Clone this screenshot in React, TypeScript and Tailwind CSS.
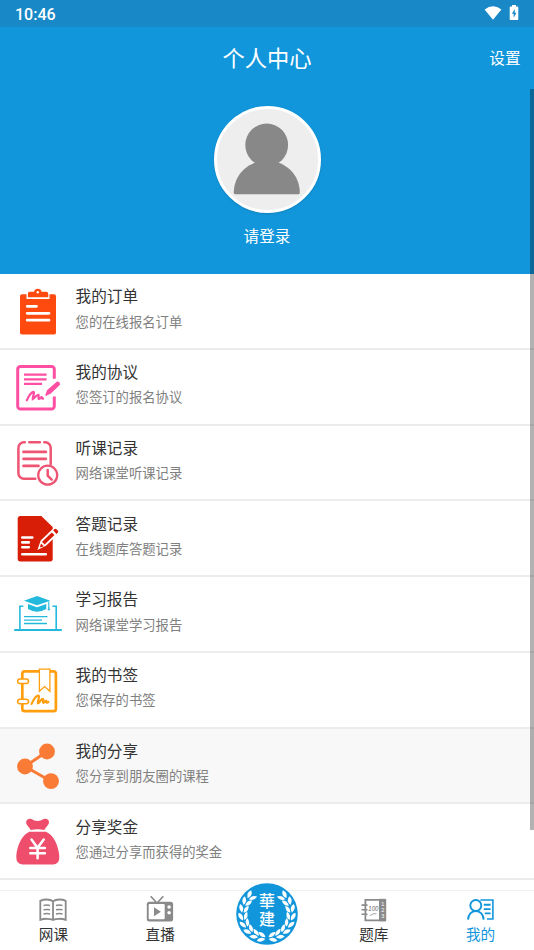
import type { ReactNode } from "react";
import clsx from "clsx";

interface MenuItem {
  title: string;
  desc: string;
  icon: ReactNode;
  pressed?: boolean;
}

const OrderIcon = () => (
  <svg viewBox="0 0 50 50" className="size-[50px]">
    <rect x="8" y="7.2" width="36" height="40.2" rx="2" fill="#ff4a0f" />
    <path d="M14.5 6h23v6h-23z" fill="#fff" />
    <path
      d="M17.5 4.700h4.500a3.900 3.900 0 0 1 7.600 0h4.500q2.200 0 2.200 2.200v3.300H15.900V6.900q0-2.200 1.600-2.200z"
      fill="#ff4a0f"
    />
    <circle cx="25.800" cy="5.300" r="1.200" fill="#fff" />
    <path d="M15.200 19.300h9.300M15.200 26.300h21.800M15.200 33.200h21.800" stroke="#fff" strokeWidth="2.800" strokeLinecap="round" />
  </svg>
);

const AgreementIcon = () => (
  <svg viewBox="0 0 50 50" className="size-[50px]" fill="none" stroke="#ff4fa3">
    <path
      d="M42.300 15.800V6.300a2.700 2.700 0 0 0-2.700-2.700H8.400a2.700 2.700 0 0 0-2.700 2.700v37a2.700 2.700 0 0 0 2.700 2.700h31.200a2.700 2.700 0 0 0 2.700-2.700V33.500"
      strokeWidth="3"
    />
    <path d="M12 11.600h22.600M12 16.300h22.600M12 20.900h18" strokeWidth="2.200" />
    <path
      d="M14.800 37.300c2-4.300 4.500-8 6.600-8.400 1.600 0-.9 5-.6 7.200 1.800-.8 3.700-4.600 5.600-4.300 1 .6-.7 3.500.5 4.200 1.400 0 1.700-2 2.900-1.800.8.200-.1 1.700 1.300 1.500"
      strokeWidth="2.200"
      strokeLinecap="round"
    />
    <path d="M34 32.200l1.700-4.700 9.500-8.300 1.700.4.400 1.900-9.200 8.700z" fill="#ff4fa3" strokeWidth="1.400" strokeLinejoin="round" />
  </svg>
);

const LessonIcon = () => (
  <svg viewBox="0 0 50 50" className="size-[50px]" fill="none" stroke="#ee5572" strokeWidth="2.500" strokeLinecap="round">
    <path d="M12.800 3.300H12A5.600 5.600 0 0 0 6.400 8.900v25.300a5.600 5.600 0 0 0 5.600 5.600h11.300" />
    <path d="M17.300 3.300h10.600M32.300 3.300h.8a5.600 5.600 0 0 1 5.600 5.600v16" />
    <path d="M11.500 12.900h22.400M11.500 19.800h22.400M11.500 26.900h15" strokeWidth="2.700" />
    <circle cx="35.700" cy="36.200" r="9.500" strokeWidth="2.300" fill="#fff" />
    <path d="M35.700 31v5.700l4 4" strokeWidth="2.500" />
  </svg>
);

const AnswerIcon = () => (
  <svg viewBox="0 0 50 50" className="size-[50px]">
    <path d="M8 2h21.300l11.400 10.900v31.800q0 2.700-2.500 2.700H8.200q-2.500 0-2.500-2.700V4.500Q5.700 2 8 2z" fill="#d81e06" />
    <path d="M10.300 23.500h10M10.300 28.400h6.500M10.300 33.300h6.500M10.300 40.200h23.500" stroke="#fff" strokeWidth="2.600" strokeLinecap="round" />
    <path d="M25.400 36.100l3.300-9.700 12-11.400 5.300 5.200-12 11.500z" fill="#fff" />
    <path d="M30 27.700l9.800-9.200 2.700 2.600-9.900 9.500zM27.800 33.600l1.200-4.200 2.900 2.800z" fill="#d81e06" />
    <path d="M41.200 16.300l1.300-1.200q1.200-.7 2.300.4l1 1q.9 1.200 0 2.300l-1.400 1.200z" fill="#d81e06" />
  </svg>
);

const ReportIcon = () => (
  <svg viewBox="0 0 50 50" className="size-[50px]" fill="none" stroke="#23b9dd">
    <path d="M2.200 40h47.600" strokeWidth="2.200" />
    <path d="M11.300 16.300H7.900V39.500M40.500 16.300h3.700V39.500" strokeWidth="1.600" />
    <path d="M25 6l13.300 4.700L25 15.300l-13-4.600z" fill="#23b9dd" stroke="none" />
    <path d="M16 14.100l9 3.100 9.300-3.100v5q-9.300 5.200-18.300 0z" fill="#23b9dd" stroke="none" />
    <path d="M36.800 11.500v7" strokeWidth="1.100" />
    <path d="M36.800 17.300l1 2.800h-2z" fill="#23b9dd" strokeWidth=".5" />
    <path d="M12 26.700h23.500M12 30.100h18M12 33.500h23" strokeWidth="1.300" />
  </svg>
);

const BookmarkIcon = () => (
  <svg viewBox="0 0 50 50" className="size-[50px]" fill="none" stroke="#ff9e0f">
    <rect x="10.300" y="5.300" width="33.600" height="39.900" rx="2.500" strokeWidth="2.700" />
    <rect x="5.600" y="13" width="10.900" height="4.500" rx="2.250" fill="#fff" strokeWidth="1.500" />
    <rect x="5.600" y="33.200" width="10.900" height="4.500" rx="2.250" fill="#fff" strokeWidth="1.500" />
    <path d="M27.400 3.200h10.500v22l-5.300-4.700-5.200 4.700z" fill="#fff" strokeWidth="1.300" />
    <path
      d="M19.600 37.900c1.900-4.300 5-8.400 7-8.200 1.600.5-1.300 5.500-.7 7.500 1.800-.2 3.500-4.900 5.200-4.200 1 .7-.9 3.200.3 3.800 1.400-.2 1.700-2.400 2.900-2 .7.300-.6 2 .5 1.900q1 0 1.600-.9"
      strokeWidth="2.200"
      strokeLinecap="round"
    />
  </svg>
);

const ShareIcon = () => (
  <svg viewBox="0 0 50 50" className="size-[50px]" fill="#fa7b35">
    <path d="M35 9.500L13 24.500l26 14.700" fill="none" stroke="#fa7b35" strokeWidth="3" />
    <circle cx="35" cy="9.500" r="7.900" />
    <circle cx="13" cy="24.500" r="7.900" />
    <circle cx="39" cy="39.200" r="7.900" />
  </svg>
);

const BonusIcon = () => (
  <svg viewBox="0 0 50 50" className="size-[50px]" fill="#ee4e6b">
    <path d="M14.100 5.300c0-2.800 2.800-4.100 5.200-3.300 2.700 1 3.300 2 6.200 2s3.700-1 6.300-2c2.600-.8 5.300.5 5.200 3.300-.1 3-3.300 4.700-4.700 7.700q-6.700-1.300-13.500 0c-1.500-3-4.700-4.700-4.700-7.700z" />
    <path d="M17.500 14.700h16.400c7.600 2.800 12.600 13.800 13.400 24.300q.4 8.400-6 8.400H10.500q-6.600 0-6.200-8.400c.8-10.500 5.700-21.500 13.200-24.300z" />
    <path d="M19.500 22.500l6 8.300 6.200-8.300M25.600 30.800v10.400M18.300 31.100h14.600M18.300 36.200h14.600" fill="none" stroke="#fff" strokeWidth="2.500" strokeLinecap="round" />
  </svg>
);

const BookIcon = () => (
  <svg viewBox="0 0 30 28" className="h-7 w-[30px]" fill="none" stroke="#8a8a8a">
    <path d="M15 6.200C11.800 4 6 4 2.300 5.900v18.900c3.700-1.400 9.500-1.400 12.700.2 3.200-1.600 9-1.600 12.700-.2V5.900C24 4 18.200 4 15 6.200zV25" strokeWidth="1.800" />
    <path d="M5.500 10.500q3.300-.8 6.500 0M5.500 14.800q3.300-.8 6.500 0M5.500 19q3.300-.8 6.500 0M18 10.500q3.300-.8 6.500 0M18 14.800q3.300-.8 6.500 0M18 19q3.300-.8 6.500 0" strokeWidth="1.500" />
  </svg>
);

const LiveIcon = () => (
  <svg viewBox="0 0 30 28" className="h-7 w-[30px]" fill="#8a8a8a">
    <path d="M5.700 1.200l5.500 6M18.300 1.200l-5.500 6" stroke="#8a8a8a" strokeWidth="1.700" />
    <rect x="1.800" y="6.800" width="26.300" height="19.800" rx="2.500" />
    <rect x="3.700" y="8.900" width="16" height="15.400" rx="1" fill="#fff" />
    <path d="M9 12.200l6.900 4.500L9 21.200z" />
    <circle cx="24.100" cy="12" r="1.800" fill="#fff" />
    <circle cx="24.100" cy="17.700" r="1.800" fill="#fff" />
  </svg>
);

const QuizIcon = () => (
  <svg viewBox="0 0 30 28" className="h-7 w-[30px]" fill="none" stroke="#8a8a8a">
    <path d="M7 4.800h19v20.500H6.400V4.800z" strokeWidth="1.800" />
    <path d="M20.500 4.300h6.200v21.500h-6.200z" fill="#8a8a8a" strokeWidth="1" />
    <path d="M2.500 10.100h6M2.500 14.700h6M2.500 19.300h6" strokeWidth="1.600" />
    <text x="14.300" y="16.300" fill="#666" stroke="none" fontSize="8" textLength="10" lengthAdjust="spacingAndGlyphs" textAnchor="middle" className="font-['Liberation_Sans'] italic">
      100
    </text>
    <path d="M11 20.500q3-2.400 6.500-1.800" strokeWidth=".8" />
    <g fill="#fff" stroke="none" fontSize="5.500" className="font-['Liberation_Sans']">
      <text x="22.300" y="11">1</text>
      <text x="22.300" y="17">2</text>
      <text x="22.300" y="23">3</text>
    </g>
  </svg>
);

const MineIcon = () => (
  <svg viewBox="0 0 30 28" className="h-7 w-[30px]" fill="none" stroke="#1296db" strokeWidth="1.900">
    <circle cx="9.800" cy="10.500" r="5.500" />
    <path d="M2 24.600c.3-5 3.500-8.600 7.800-8.600s7.600 3.600 7.900 8.600" />
    <path d="M14.400 5h12.500v19H21" strokeWidth="1.600" />
    <path d="M17.800 9.800h6.800M17.800 14.100h6.800M18.800 18.400h5.800" />
  </svg>
);

// 桂冠叶片角度
const leaves = [50, 68, 86, 104, 122, 140, 158, 175];

const Logo = () => (
  <svg viewBox="0 0 62 62" className="size-[62px]">
    <circle cx="31" cy="31" r="30.800" fill="#1296db" />
    {[1, -1].map((side) => (
      <g key={side} transform={side === 1 ? undefined : "translate(62 0) scale(-1 1)"} fill="#fff">
        {leaves.map((a) => (
          <g key={a} transform={`rotate(${a} 31 31)`}>
            <path d="M31.500 6q-4-5-8.500-2.300 2.800 5 8.500 2.300z" />
            <path d="M31.500 7.600q-6-.5-7.500 4.600 6 .5 7.500-4.600z" />
          </g>
        ))}
      </g>
    ))}
    <g fill="#fff" textAnchor="middle" fontSize="16" className="font-['Noto_Sans_CJK_TC',sans-serif] font-medium">
      <text x="31" y="23.500">華</text>
      <text x="31" y="41.500">建</text>
    </g>
  </svg>
);

const menu: MenuItem[] = [
  { title: "我的订单", desc: "您的在线报名订单", icon: <OrderIcon /> },
  { title: "我的协议", desc: "您签订的报名协议", icon: <AgreementIcon /> },
  { title: "听课记录", desc: "网络课堂听课记录", icon: <LessonIcon /> },
  { title: "答题记录", desc: "在线题库答题记录", icon: <AnswerIcon /> },
  { title: "学习报告", desc: "网络课堂学习报告", icon: <ReportIcon /> },
  { title: "我的书签", desc: "您保存的书签", icon: <BookmarkIcon /> },
  { title: "我的分享", desc: "您分享到朋友圈的课程", icon: <ShareIcon />, pressed: true },
  { title: "分享奖金", desc: "您通过分享而获得的奖金", icon: <BonusIcon /> },
];

const StatusBar = () => (
  <div className="flex h-[27px] items-center justify-between bg-[#1888c6] pl-[15px] pr-[15px] text-white">
    <span className="pt-0.5 font-[Roboto] text-base font-medium leading-5">10:46</span>
    <div className="flex items-center gap-[7px] pb-0.5">
      <svg viewBox="0 0 18 14" className="h-3.5 w-[18px]" fill="#fff">
        <path d="M9 13.800L.6 3.500Q9-3 17.400 3.500z" />
      </svg>
      <svg viewBox="0 0 10 15" className="h-[15px] w-2.5" fill="#fff">
        <path d="M3 0h4v1.500h1.500q.8 0 .8.800v11.900q0 .8-.8.800h-7q-.8 0-.8-.8V2.300q0-.8.8-.8H3z" />
        <path d="M5.800 4L2.900 8.700h1.800v4l2.800-5H5.800z" fill="#1888c6" />
      </svg>
    </div>
  </div>
);

const Row = ({ title, desc, icon, pressed }: MenuItem) => (
  <div
    className={clsx(
      "flex h-[75.75px] shrink-0 border-b-2 border-[#ececec] pl-[11.6px] pt-3",
      pressed ? "bg-[#f8f8f8]" : "bg-white"
    )}
  >
    <div className="shrink-0 pt-px">{icon}</div>
    <div className="pl-3.5">
      <div className="-mt-[0.75px] text-[15.6px] leading-5 text-[#333]">{title}</div>
      <div className="mt-[6.25px] text-[13.33px] leading-5 text-[#808080]">{desc}</div>
    </div>
  </div>
);

const Tab = ({ label, icon, active }: { label: string; icon: ReactNode; active?: boolean }) => (
  <div className="flex flex-1 flex-col items-center pt-1">
    {icon}
    <span className={clsx("mt-px text-[14.6px] leading-5", active ? "text-[#1296db]" : "text-[#333]")}>{label}</span>
  </div>
);

export default function App() {
  return (
    <div className="relative flex h-[950px] w-[534px] flex-col overflow-hidden bg-white font-['Noto_Sans_CJK_SC',sans-serif]">
      <StatusBar />
      <div className="flex h-[247px] shrink-0 flex-col bg-[#1296db] text-white">
        <div className="grid h-[61px] grid-cols-3 items-center">
          <span />
          <span className="pb-0.5 text-center text-[22.3px] leading-8">个人中心</span>
          <span className="pr-[13.5px] pt-px text-right text-[15.6px]">设置</span>
        </div>
        <div className="mt-[18px] flex flex-col items-center">
          <div className="flex size-[107px] justify-center overflow-hidden rounded-full border-[3px] border-white bg-[#eee] shadow-sm">
            <svg viewBox="0 0 101 101" className="size-[101px]" fill="#888">
              <circle cx="49.700" cy="36" r="21.400" />
              <path d="M16.800 83.800c0-18 14-32 33-32s33 14 33 32q0 1.500-1.500 1.500H18.300q-1.500 0-1.500-1.500z" />
            </svg>
          </div>
          <span className="mt-3 text-[15.6px] leading-5">请登录</span>
        </div>
      </div>
      <div className="flex h-[616px] shrink-0 flex-col overflow-hidden">
        {menu.map((item) => (
          <Row key={item.title} {...item} />
        ))}
      </div>
      <nav className="flex h-[60px] shrink-0 border-t border-[#f0f0f0] bg-white">
        <Tab label="网课" icon={<BookIcon />} />
        <Tab label="直播" icon={<LiveIcon />} />
        <div className="-mt-2 flex flex-1 justify-center">
          <Logo />
        </div>
        <Tab label="题库" icon={<QuizIcon />} />
        <Tab label="我的" icon={<MineIcon />} active />
      </nav>
      {/* 滚动条 */}
      <div className="absolute right-0 top-[89px] h-[741px] w-[4.5px] bg-black/30" />
    </div>
  );
}
